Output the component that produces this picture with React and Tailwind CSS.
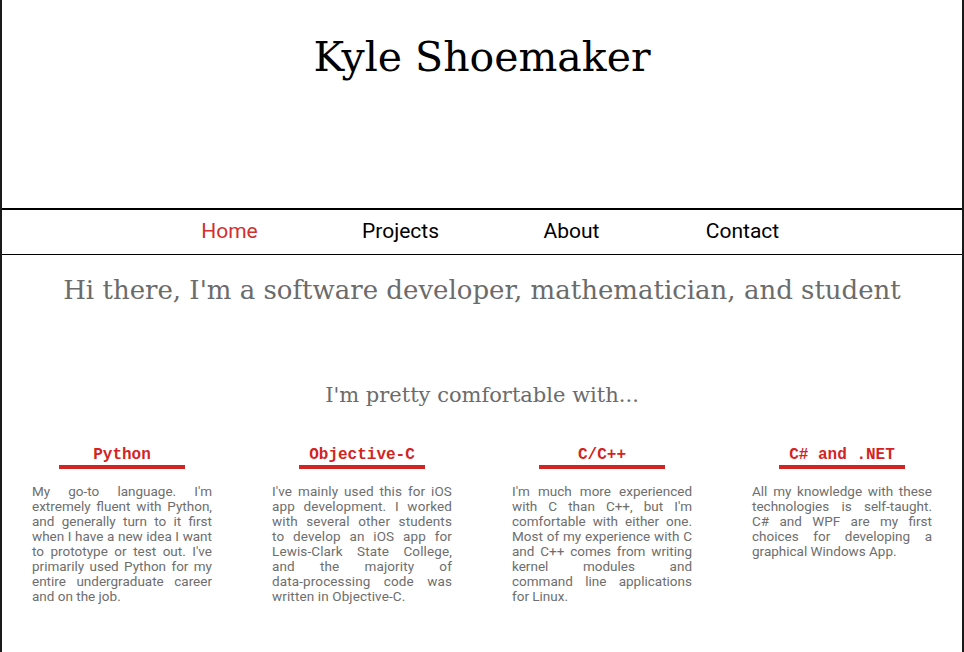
import React from 'react';

const navItems = ['Home', 'Projects', 'About', 'Contact'];

const Nw = ({ children }) => <span className="whitespace-nowrap">{children}</span>;

const skills = [
  {
    name: 'Python',
    track: 'tracking-normal',
    text: "My go-to language. I'm extremely fluent with Python, and generally turn to it first when I have a new idea I want to prototype or test out. I've primarily used Python for my entire undergraduate career and on the job.",
  },
  {
    name: 'Objective-C',
    track: 'tracking-[0.12px]',
    text: (
      <>
        I've mainly used this for iOS app development. I worked with several other students to develop an iOS app for{' '}
        <Nw>Lewis-Clark</Nw> State College, and the majority of <Nw>data-processing</Nw> code was written in{' '}
        <Nw>Objective-C.</Nw>
      </>
    ),
  },
  {
    name: 'C/C++',
    track: 'tracking-normal',
    text: "I'm much more experienced with C than C++, but I'm comfortable with either one. Most of my experience with C and C++ comes from writing kernel modules and command line applications for Linux.",
  },
  {
    name: 'C# and .NET',
    track: 'tracking-normal',
    text: 'All my knowledge with these technologies is self-taught. C# and WPF are my first choices for developing a graphical Windows App.',
  },
];

const App = () => {
  return (
    <div className="min-h-[652px] border-x-2 border-[#1a1a1a] bg-white">
      {/* header */}
      <header className="h-[210px] border-b-2 border-black pt-[30px] text-center">
        <h1 className="font-['DejaVu_Serif',serif] text-[41px] leading-[54px] text-black">
          Kyle Shoemaker
        </h1>
      </header>

      {/* nav */}
      <nav className="flex h-[45px] items-center justify-center border-b border-black pl-2 font-['Roboto',sans-serif] text-[21px]">
        {navItems.map((item, i) => (
          <a
            key={item}
            href="#"
            className={'w-[171px] text-center ' + (i === 0 ? 'text-[#d32f2f]' : 'text-black')}
          >
            {item}
          </a>
        ))}
      </nav>

      <main className="font-['DejaVu_Serif',serif] text-[#6b6b6b]">
        <h2 className="pt-[17px] text-center text-[26px] leading-[36px]">
          Hi there, I'm a software developer, mathematician, and student
        </h2>
        <h3 className="pt-[72px] text-center text-[21px] leading-[30px]">
          I'm pretty comfortable with...
        </h3>

        <div className="grid grid-cols-4 pt-[37px]">
          {skills.map(s => (
            <div key={s.name} className="px-[30px]">
              <h4 className="mx-auto w-[126px] border-b-4 border-[#d32424] pb-[2px] text-center font-['Liberation_Mono',monospace] text-[16px] leading-[16px] font-bold text-[#d32424]">
                {s.name}
              </h4>
              <p className={'pt-[15px] text-justify font-[Roboto,sans-serif] text-[13.5px] leading-[15px] text-[#6e6e6e] ' + s.track}>
                {s.text}
              </p>
            </div>
          ))}
        </div>
      </main>
    </div>
  );
};

export default App;
